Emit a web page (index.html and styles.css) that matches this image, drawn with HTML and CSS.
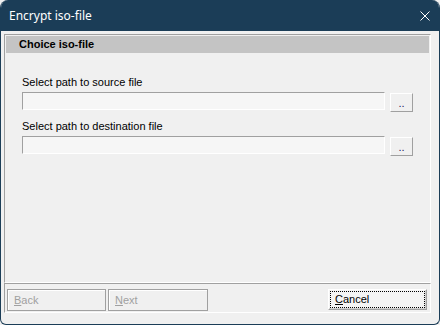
FILE: index.html
```html
<!DOCTYPE html>
<html lang="en">
<head>
    <meta charset="UTF-8">
    <title>Encrypt iso-file</title>
    <link rel="stylesheet" href="styles.css">
</head>
<body>
    <div class="window">
        <div class="titlebar">
            <span class="title">Encrypt iso-file</span>
            <svg class="close" width="10" height="10" viewBox="0 0 10 10">
                <path d="M0.5 0.5 L9.5 9.5 M9.5 0.5 L0.5 9.5" stroke="#fff" stroke-width="1" fill="none"/>
            </svg>
        </div>
        <div class="client">
            <div class="panel">
                <div class="panel-header">Choice iso-file</div>
                <div class="fields">
                    <label class="field-label">Select path to source file</label>
                    <div class="path-row">
                        <div class="path-input"></div>
                        <button class="browse">..</button>
                    </div>
                    <label class="field-label second">Select path to destination file</label>
                    <div class="path-row">
                        <div class="path-input"></div>
                        <button class="browse">..</button>
                    </div>
                </div>
            </div>
            <div class="nav">
                <button class="nav-btn" disabled><u>B</u>ack</button>
                <button class="nav-btn next" disabled><u>N</u>ext</button>
                <button class="nav-btn cancel"><span class="focus"><u>C</u>ancel</span></button>
            </div>
        </div>
    </div>
</body>
</html>
```

FILE: styles.css
```css
body {
    margin: 0;
    background-color: #f0f0f0;
    font-family: Tahoma, "Liberation Sans", sans-serif;
    font-size: 11px;
    color: #000;
}
.window {
    width: 440px;
    height: 325px;
    box-sizing: border-box;
    display: flex;
    flex-direction: column;
    border: 1px solid #1b3d57;
    border-top: none;
    border-radius: 8px 8px 6px 6px;
    overflow: hidden;
    background-color: #f0f0f0;
}
.titlebar {
    flex: none;
    height: 31px;
    background-color: #1b3d57;
    color: #fff;
    display: flex;
    align-items: center;
    justify-content: space-between;
    padding: 0 9px 0 8px;
}
.title {
    font-family: "Segoe UI", "Noto Sans", sans-serif;
    font-size: 12px;
}
.close {
    display: block;
}
.client {
    flex: 1;
    display: flex;
    flex-direction: column;
    padding: 3px 8px 0 3px;
}
.panel {
    height: 249px;
    box-sizing: border-box;
    border: 1px solid;
    border-color: #a0a0a0 #fff #fff #a0a0a0;
    padding: 1px;
}
.panel-header {
    height: 17px;
    line-height: 17px;
    background-color: #c4c4c4;
    font-weight: bold;
    padding-left: 13px;
}
.fields {
    display: flex;
    flex-direction: column;
    padding: 23px 16px 0 16px;
}
.field-label {
    display: block;
    line-height: 13px;
    margin-bottom: 3px;
}
.field-label.second {
    margin-top: 8px;
}
.path-row {
    display: flex;
    align-items: flex-start;
    height: 20px;
}
.path-input {
    flex: 1;
    height: 18px;
    box-sizing: border-box;
    border: 1px solid;
    border-color: #a0a0a0 #fff #fff #a0a0a0;
    background-color: #f6f6f6;
}
.browse {
    width: 23px;
    height: 19px;
    margin: 1px 0 0 5px;
    padding: 2px 0 0;
    box-sizing: border-box;
    border: 1px solid;
    border-color: #fff #a0a0a0 #a0a0a0 #fff;
    background-color: #f0f0f0;
    font-family: inherit;
    font-size: 11px;
    color: #20205a;
    line-height: 15px;
}
.nav {
    height: 30px;
    box-sizing: border-box;
    border: 1px solid;
    border-color: #a0a0a0 #fff #fff #a0a0a0;
    display: flex;
    align-items: flex-start;
    gap: 2px;
    padding: 5px 3px 0 2px;
}
.nav-btn {
    width: 99px;
    height: 22px;
    box-sizing: border-box;
    border: 1px solid #a0a0a0;
    box-shadow: inset 1px 1px #fff;
    background-color: #f0f0f0;
    color: #a0a0a0;
    font-family: inherit;
    font-size: 11px;
    text-align: left;
    padding: 0 0 0 6px;
}
.nav-btn.next {
    width: 100px;
}
.nav-btn.cancel {
    margin-left: auto;
    height: 21px;
    padding: 1px;
    color: #000;
    border-color: #fff #a0a0a0 #a0a0a0 #fff;
    box-shadow: inset -1px -1px #d0d0d0;
    background-color: #f4f4f4;
}
.focus {
    display: block;
    height: 100%;
    box-sizing: border-box;
    border: 1px dotted #000;
    padding-left: 4px;
    line-height: 15px;
}
```
